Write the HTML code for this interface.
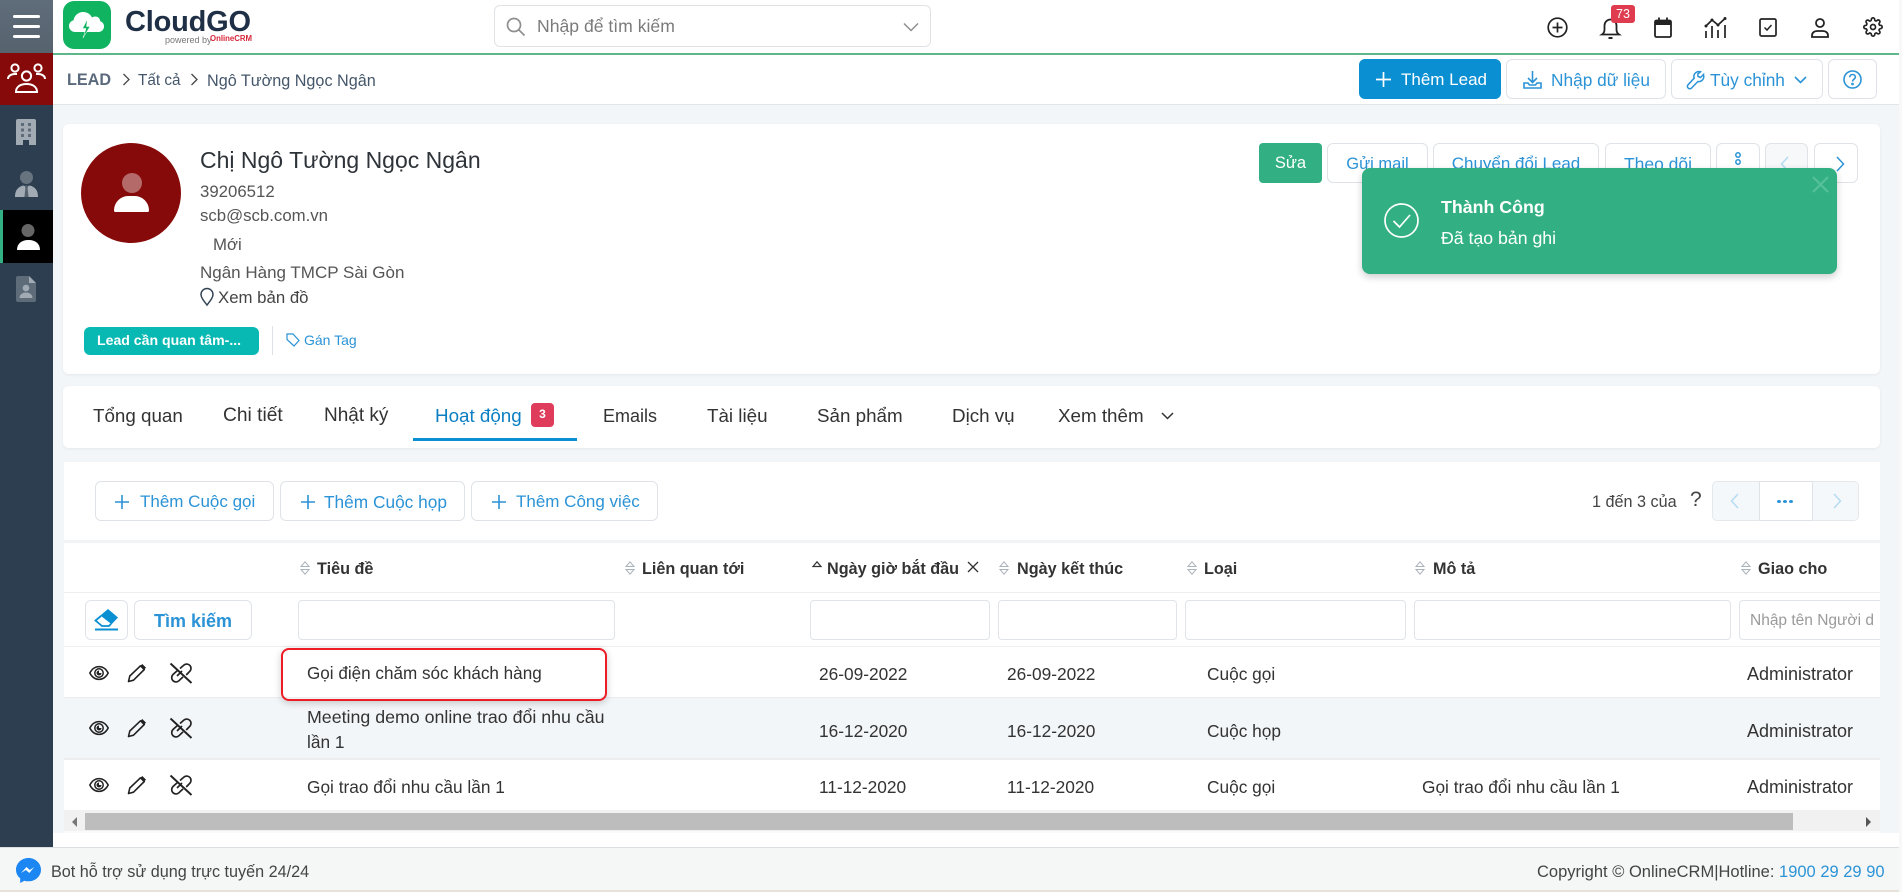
<!DOCTYPE html>
<html lang="vi"><head><meta charset="utf-8"><title>CloudGO</title>
<style>
*{box-sizing:border-box}
html,body{margin:0;padding:0;width:1902px;height:892px;overflow:hidden;background:#fff;font-family:"Liberation Sans","Noto Sans CJK SC",sans-serif;color:#333}
.a{position:absolute}
.t{position:absolute;white-space:nowrap;line-height:20px;height:20px}
.b{position:absolute;background:#fff;border:1px solid #dfe3e8;border-radius:6px;color:#2b93d6;display:flex;align-items:center;justify-content:center;white-space:nowrap;font-size:17px;padding-top:2px}
.in{position:absolute;top:600px;height:40px;background:#fff;border:1px solid #e0e3e7;border-radius:4px}
.h{font-size:16.200px;font-weight:bold;color:#333;top:559px}
.c{font-size:17.300px;color:#333}
.p{font-size:16.800px;color:#555}
svg{position:absolute;overflow:visible}
.tab{font-size:18.800px;color:#333;top:406px}
</style></head><body>
<svg width="0" height="0" style="position:absolute"><defs>
<symbol id="sort" viewBox="0 0 10 14"><path d="M5 .8 9 5.500H1zM1 8.500h8L5 13.200z" fill="none" stroke="#aab2ba" stroke-width="1"/></symbol>
<symbol id="eye" viewBox="0 0 20 20"><path d="M.8 10C3 5.800 6.200 3.600 10 3.600s7 2.200 9.200 6.400c-2.200 4.200-5.400 6.400-9.200 6.400S3 14.200.8 10z" fill="none" stroke="#222" stroke-width="1.500"/><circle cx="10" cy="10" r="4.200" fill="none" stroke="#222" stroke-width="1.500"/><path d="M10 7.500a2.500 2.500 0 1 0 2.500 2.500H10z" fill="#222"/></symbol>
<symbol id="pen" viewBox="0 0 20 20"><path d="M1.500 18.500 2.800 13 13.500 2.800l3.800 3.700L6.500 17.200z" fill="none" stroke="#222" stroke-width="1.600" stroke-linejoin="round"/><path d="M13.200 3 15.300 1l3.700 3.600-2 2.200z" fill="#222"/></symbol>
<symbol id="unlink" viewBox="0 0 24 22"><path d="M9 8 4 12.500a4.300 4.300 0 0 0 6 6.200l4-3.800" fill="none" stroke="#222" stroke-width="1.700"/><path d="M11 6.500 15 3a4.300 4.300 0 0 1 6 6.100l-3.800 3.900" fill="none" stroke="#222" stroke-width="1.700"/><path d="M8 14l5-5" stroke="#222" stroke-width="1.700"/><path d="M1.500 1.500 22.500 21" stroke="#222" stroke-width="1.900"/></symbol>
<symbol id="plus" viewBox="0 0 16 16"><path d="M8 1v14M1 8h14" stroke="#2b93d6" stroke-width="1.600" fill="none"/></symbol>
</defs></svg>

<!-- sidebar -->
<div class="a" style="left:0;top:0;width:53px;height:848px;background:#2c3e50"></div>
<div class="a" style="left:0;top:0;width:53px;height:53px;background:linear-gradient(#5f6c79,#56636f)"></div>
<div class="a" style="left:13px;top:15px;width:27px;height:3px;background:#fff;border-radius:2px"></div>
<div class="a" style="left:13px;top:25px;width:27px;height:3px;background:#fff;border-radius:2px"></div>
<div class="a" style="left:13px;top:35px;width:27px;height:3px;background:#fff;border-radius:2px"></div>
<div class="a" style="left:0;top:53px;width:53px;height:52px;background:#870a0a"></div>
<svg style="left:7px;top:62px" width="39" height="32" viewBox="0 0 39 32" fill="none" stroke="#fff" stroke-width="2">
<circle cx="8" cy="6" r="3.600"/><circle cx="31" cy="6" r="3.600"/><circle cx="19.500" cy="14" r="4.600"/>
<path d="M1 17c0-3 3-5 7-5h2M38 17c0-3-3-5-7-5h-2"/><path d="M9 30c0-5 4-8 10.500-8S30 25 30 30z"/></svg>
<!-- building -->
<svg style="left:16px;top:119px" width="20" height="26" viewBox="0 0 20 26"><path d="M2 0h16a2 2 0 0 1 2 2v24h-7v-5H7v5H0V2a2 2 0 0 1 2-2z" fill="#a2abb4"/><g fill="#5e6b78"><rect x="5" y="4" width="3" height="3"/><rect x="12" y="4" width="3" height="3"/><rect x="5" y="9.500" width="3" height="3"/><rect x="12" y="9.500" width="3" height="3"/><rect x="5" y="15" width="3" height="3"/><rect x="12" y="15" width="3" height="3"/></g></svg>
<!-- suit person -->
<svg style="left:15px;top:171px" width="23" height="26" viewBox="0 0 23 26"><circle cx="11.500" cy="6.500" r="6.500" fill="#67747f"/><path d="M0 26c0-7 3-10 8-11.500l3.500 1 3.500-1C20 16 23 19 23 26z" fill="#a2abb4"/><path d="M9.800 14.500h3.400l-.6 3 1 8.500h-4.200l1-8.500z" fill="#55626e"/></svg>
<div class="a" style="left:0;top:210px;width:53px;height:53px;background:#000"></div>
<div class="a" style="left:0;top:210px;width:3px;height:53px;background:#32b083"></div>
<svg style="left:17px;top:224px" width="23" height="26" viewBox="0 0 23 26"><circle cx="11" cy="6.500" r="6.500" fill="#666"/><path d="M0 26c0-6 4-10 11.500-10S23 20 23 26z" fill="#fff"/></svg>
<!-- contact doc -->
<svg style="left:16px;top:276px" width="20" height="26" viewBox="0 0 20 26"><path d="M2 0h11l7 7v17a2 2 0 0 1-2 2H2a2 2 0 0 1-2-2V2a2 2 0 0 1 2-2z" fill="#5e6b78"/><path d="M13 0l7 7h-7z" fill="#a2abb4"/><circle cx="10" cy="12" r="3.300" fill="#a2abb4"/><path d="M3.500 22c0-3.500 3-5.500 6.500-5.500s6.500 2 6.500 5.500z" fill="#a2abb4"/></svg>

<!-- header -->
<div class="a" style="left:53px;top:53px;width:1846px;height:1.500px;background:#5fb68b"></div>
<div class="a" style="left:63px;top:1px;width:48px;height:48px;border-radius:11px;background:#0fb360"></div>
<svg style="left:68px;top:10px" width="38" height="30" viewBox="0 0 38 30"><path d="M6.500 22a6 6 0 0 1-1-11.800C6.500 5 11 1.500 16 2c3.800.4 6.500 2.500 8 5.500 1.500-1 3.200-1.300 5-.7 2 .7 3 2.400 3.200 4.300A5.600 5.600 0 0 1 31 22z" fill="#fff"/><path d="M19.500 9 14.500 18.500h3.500L15 28l7-11.500h-3.500z" fill="#0fb360" stroke="#fff" stroke-width=".5"/></svg>
<div class="t" style="left:125px;top:6px;height:32px;line-height:32px;font-size:29px;font-weight:bold;color:#1f2f45;letter-spacing:-.2px">CloudGO</div>
<div class="t" style="left:165px;top:34px;height:12px;line-height:12px;font-size:9px;color:#777">powered by</div>
<div class="t" style="left:210px;top:33px;height:12px;line-height:12px;font-size:7.800px;font-weight:bold;color:#d8263a">OnlineCRM</div>
<div class="a" style="left:494px;top:5px;width:437px;height:42px;border:1px solid #dfe3e6;border-radius:6px"></div>
<svg style="left:506px;top:17px" width="20" height="20" viewBox="0 0 20 20" fill="none" stroke="#8f8f8f" stroke-width="1.700"><circle cx="8" cy="8" r="6.500"/><path d="M13 13l5.500 5.500"/></svg>
<div class="t" style="left:537px;top:16px;font-size:17.600px;color:#7b7b7b">Nhập để tìm kiếm</div>
<svg style="left:902px;top:22px" width="18" height="10" viewBox="0 0 18 10" fill="none" stroke="#8f8f8f" stroke-width="1.500"><path d="M2 1.500l7 7 7-7"/></svg>

<svg style="left:1547px;top:17px" width="21" height="21" viewBox="0 0 21 21" fill="none" stroke="#222" stroke-width="1.700"><circle cx="10.500" cy="10.500" r="9.300"/><path d="M10.500 5.500v10M5.500 10.500h10"/></svg>
<svg style="left:1601px;top:17px" width="19" height="22" viewBox="0 0 19 22" fill="none" stroke="#222" stroke-width="1.800"><path d="M1 17.500c1.500-1 2.500-2.500 2.500-5V8.500a6 6 0 0 1 12 0v4c0 2.500 1 4 2.500 5z"/><path d="M7.500 21h4" stroke-width="2"/></svg>
<div class="a" style="left:1611px;top:5px;width:24px;height:18px;background:#df3c4f;border-radius:3px;color:#fff;font-size:12.500px;line-height:18px;text-align:center">73</div>
<svg style="left:1654px;top:17px" width="18" height="21" viewBox="0 0 18 21"><rect x="1" y="3.500" width="16" height="16.500" rx="1.500" fill="none" stroke="#222" stroke-width="1.800"/><path d="M1 3.500h16V8H1z" fill="#222"/><path d="M5 .5v4M13 .5v4" stroke="#222" stroke-width="1.800"/></svg>
<svg style="left:1704px;top:17px" width="23" height="21" viewBox="0 0 23 21" fill="none" stroke="#222" stroke-width="1.700"><path d="M2 9l6-6 6 5 7-6.500"/><path d="M2 14v7M8 9v12M14 13v8M21 8v13"/><g fill="#222" stroke="none"><circle cx="2" cy="9" r="1.500"/><circle cx="8" cy="3" r="1.500"/><circle cx="14" cy="8" r="1.500"/><circle cx="21" cy="1.500" r="1.500"/></g></svg>
<svg style="left:1759px;top:18px" width="18" height="19" viewBox="0 0 18 19" fill="none" stroke="#222" stroke-width="1.700"><rect x="1" y="1" width="16" height="17" rx="1.500"/><path d="M5.500 9.500l2.500 2.500 4.500-5" stroke-width="1.500"/></svg>
<svg style="left:1811px;top:18px" width="18" height="20" viewBox="0 0 18 20" fill="none" stroke="#222" stroke-width="1.800"><circle cx="9" cy="5" r="4"/><path d="M1 19v-1.500c0-3 2.500-4.500 5-4.500h6c2.500 0 5 1.500 5 4.500V19z"/></svg>
<svg style="left:1863px;top:17px" width="20" height="20" viewBox="0 0 24 24" fill="none" stroke="#222" stroke-width="2"><path d="M12 15a3 3 0 100-6 3 3 0 000 6z"/><path d="M19.400 15a1.650 1.650 0 00.33 1.820l.06.06a2 2 0 010 2.830 2 2 0 01-2.830 0l-.06-.06a1.650 1.650 0 00-1.820-.33 1.650 1.650 0 00-1 1.510V21a2 2 0 01-2 2 2 2 0 01-2-2v-.09A1.650 1.650 0 009 19.400a1.650 1.650 0 00-1.820.33l-.06.06a2 2 0 01-2.830 0 2 2 0 010-2.830l.06-.06a1.650 1.650 0 00.33-1.820 1.650 1.650 0 00-1.510-1H3a2 2 0 01-2-2 2 2 0 012-2h.09A1.650 1.650 0 004.600 9a1.650 1.650 0 00-.33-1.820l-.06-.06a2 2 0 010-2.830 2 2 0 012.830 0l.06.06a1.650 1.650 0 001.820.33H9a1.650 1.650 0 001-1.510V3a2 2 0 012-2 2 2 0 012 2v.09a1.650 1.650 0 001 1.510 1.650 1.650 0 001.820-.33l.06-.06a2 2 0 012.830 0 2 2 0 010 2.830l-.06.06a1.650 1.650 0 00-.33 1.820V9a1.650 1.650 0 001.510 1H21a2 2 0 012 2 2 2 0 01-2 2h-.09a1.650 1.650 0 00-1.510 1z"/></svg>

<!-- breadcrumb -->
<div class="a" style="left:53px;top:104px;width:1846px;height:744px;background:#f3f6f9"></div>
<div class="a" style="left:53px;top:104px;width:1846px;height:1px;background:#e3e6e9"></div>
<div class="t" style="left:67px;top:70px;font-size:16.200px;font-weight:bold;color:#5a6a7c">LEAD</div>
<svg style="left:122px;top:73px" width="8" height="13" viewBox="0 0 8 13" fill="none" stroke="#444" stroke-width="1.300"><path d="M1.500 1l5.500 5.500L1.500 12"/></svg>
<div class="t" style="left:138px;top:71px;font-size:15.300px;color:#44566a">Tất cả</div>
<svg style="left:190px;top:73px" width="8" height="13" viewBox="0 0 8 13" fill="none" stroke="#444" stroke-width="1.300"><path d="M1.500 1l5.500 5.500L1.500 12"/></svg>
<div class="t" style="left:207px;top:71px;font-size:16.200px;color:#44566a">Ngô Tường Ngọc Ngân</div>

<div class="b" style="left:1359px;top:59px;width:142px;height:40px;background:#0b8fd3;border-color:#0b8fd3;color:#fff;justify-content:flex-start;padding-left:16px"><svg style="left:16px;top:12px" width="15" height="15" viewBox="0 0 16 16"><path d="M8 0v16M0 8h16" stroke="#fff" stroke-width="1.800"/></svg><span style="margin-left:25px">Thêm Lead</span></div>
<div class="b" style="left:1506px;top:59px;width:160px;height:40px;font-size:17.300px;justify-content:flex-start"><svg style="left:16px;top:11px" width="19" height="18" viewBox="0 0 19 18" fill="none" stroke="#2b93d6" stroke-width="1.600"><path d="M9.500 0v11M5 7l4.500 4.500L14 7"/><path d="M1 12v5h17v-5h-4l-1.500 2h-6L5 12z"/></svg><span style="margin-left:44px">Nhập dữ liệu</span></div>
<div class="b" style="left:1671px;top:59px;width:152px;height:40px;font-size:17.300px;justify-content:flex-start"><svg style="left:15px;top:11px" width="18" height="19" viewBox="0 0 18 19" fill="none" stroke="#2b93d6" stroke-width="1.500"><path d="M16.500 3.500 13.500 6.500 11 5.500 10.800 3 13.500.8a5 5 0 0 0-6.300 6.400L1 13.800a2.300 2.300 0 0 0 .3 3.400 2.300 2.300 0 0 0 3.300-.2l6.300-6.500a5 5 0 0 0 5.600-6.500z"/></svg><span style="margin-left:38px">Tùy chỉnh</span><svg style="left:122px;top:16px" width="13" height="8" viewBox="0 0 13 8" fill="none" stroke="#2b93d6" stroke-width="1.600"><path d="M1 1l5.500 5.500L12 1"/></svg></div>
<div class="b" style="left:1828px;top:59px;width:49px;height:40px"><svg style="left:14px;top:10px" width="19" height="19" viewBox="0 0 19 19" fill="none" stroke="#2b93d6" stroke-width="1.600"><circle cx="9.500" cy="9.500" r="8.500"/><path d="M6.800 7.200c0-1.600 1.200-2.700 2.800-2.700s2.800 1 2.800 2.500c0 2.200-2.900 2.300-2.900 4.500"/><circle cx="9.500" cy="14" r=".6"/></svg></div>

<!-- profile card -->
<div class="a" style="left:63px;top:124px;width:1817px;height:250px;background:#fff;border-radius:6px;box-shadow:0 1px 3px rgba(0,0,0,.06)"></div>
<div class="a" style="left:81px;top:143px;width:100px;height:100px;border-radius:50%;background:#870a0a"></div>
<div class="a" style="left:122px;top:173px;width:20px;height:20px;border-radius:50%;background:#b56a6a"></div>
<div class="a" style="left:114px;top:196px;width:35px;height:16px;border-radius:17px 17px 2px 2px;background:#fff"></div>
<div class="t" style="left:200px;top:150px;font-size:23px;color:#2d3338">Chị Ngô Tường Ngọc Ngân</div>
<div class="t p" style="left:200px;top:182px">39206512</div>
<div class="t p" style="left:200px;top:206px">scb@scb.com.vn</div>
<div class="t p" style="left:213px;top:235px">Mới</div>
<div class="t p" style="left:200px;top:263px;font-size:17px">Ngân Hàng TMCP Sài Gòn</div>
<svg style="left:200px;top:288px" width="14" height="18" viewBox="0 0 14 18" fill="none" stroke="#344454" stroke-width="1.500"><path d="M7 17C3.500 12.500 1 9.500 1 6.500a6 6 0 0 1 12 0C13 9.500 10.500 12.500 7 17z"/></svg>
<div class="t" style="left:218px;top:288px;font-size:16.800px;color:#444">Xem bản đồ</div>
<div class="a" style="left:84px;top:327px;width:175px;height:28px;background:#08b9b3;border-radius:6px;color:#fff;font-weight:bold;font-size:14.100px;line-height:27px;padding-left:13px;white-space:nowrap">Lead cần quan tâm-...</div>
<div class="a" style="left:272px;top:326px;width:1px;height:29px;background:#dde1e5"></div>
<svg style="left:286px;top:333px" width="14" height="14" viewBox="0 0 14 14" fill="none" stroke="#2b93d6" stroke-width="1.200"><path d="M1 1h6l6 6.500L8 13 1 6.500z"/></svg>
<div class="t" style="left:304px;top:330px;font-size:14px;color:#2b93d6">Gán Tag</div>

<div class="a" style="left:1259px;top:143px;width:63px;height:40px;background:#32b083;border-radius:4px;color:#fff;font-size:16.500px;line-height:41px;text-align:center">Sửa</div>
<div class="b" style="left:1327px;top:143px;width:101px;height:40px;font-size:16.500px">Gửi mail</div>
<div class="b" style="left:1433px;top:143px;width:166px;height:40px">Chuyển đổi Lead</div>
<div class="b" style="left:1605px;top:143px;width:106px;height:40px;font-size:17.500px">Theo dõi</div>
<div class="b" style="left:1716px;top:143px;width:44px;height:40px"></div>
<div class="b" style="left:1765px;top:143px;width:43px;height:40px;background:#f6f8fa"><svg style="left:14px;top:12px" width="10" height="16" viewBox="0 0 10 16" fill="none" stroke="#b4dbf2" stroke-width="1.500"><path d="M8 1 1.500 8 8 15"/></svg></div>
<div class="b" style="left:1814px;top:143px;width:44px;height:40px"><svg style="left:20px;top:12px" width="10" height="16" viewBox="0 0 10 16" fill="none" stroke="#2b93d6" stroke-width="1.500"><path d="M2 1l6.500 7L2 15"/></svg></div>
<svg style="left:1733px;top:152px" width="10" height="24" viewBox="0 0 10 24" fill="none" stroke="#2b93d6" stroke-width="1.500"><circle cx="5" cy="3" r="2.200"/><circle cx="5" cy="10" r="2.200"/></svg>

<!-- toast -->
<div class="a" style="left:1362px;top:168px;width:475px;height:106px;background:#32b083;border-radius:8px;box-shadow:0 3px 8px rgba(0,0,0,.2)"></div>
<svg style="left:1384px;top:203px" width="35" height="35" viewBox="0 0 35 35" fill="none" stroke="#fff" stroke-width="1.700"><circle cx="17.500" cy="17.500" r="16.500"/><path d="M9.500 18l6 6 10.500-12"/></svg>
<div class="t" style="left:1441px;top:197px;font-size:17.800px;font-weight:bold;color:#fff">Thành Công</div>
<div class="t" style="left:1441px;top:228px;font-size:17.700px;color:#fff">Đã tạo bản ghi</div>
<svg style="left:1812px;top:176px" width="17" height="17" viewBox="0 0 17 17" stroke="#55c09a" stroke-width="2.200"><path d="M1 1l15 15M16 1 1 16"/></svg>

<!-- tabs -->
<div class="a" style="left:63px;top:386px;width:1817px;height:62px;background:#fff;border-radius:6px;box-shadow:0 1px 3px rgba(0,0,0,.06)"></div>
<div class="t tab" style="left:93px">Tổng quan</div>
<div class="t tab" style="left:223px;font-size:19.200px">Chi tiết</div>
<div class="t tab" style="left:324px;font-size:19px">Nhật ký</div>
<div class="t tab" style="left:435px;color:#0b7fc2">Hoạt động</div>
<div class="a" style="left:531px;top:403px;width:23px;height:24px;background:#df3c5c;border-radius:4px;color:#fff;font-size:12px;font-weight:bold;line-height:23px;text-align:center">3</div>
<div class="a" style="left:413px;top:438px;width:164px;height:3px;background:#0b8fd3"></div>
<div class="t tab" style="left:603px;font-size:18px">Emails</div>
<div class="t tab" style="left:707px">Tài liệu</div>
<div class="t tab" style="left:817px">Sản phẩm</div>
<div class="t tab" style="left:952px">Dịch vụ</div>
<div class="t tab" style="left:1058px">Xem thêm</div>
<svg style="left:1161px;top:412px" width="13" height="8" viewBox="0 0 13 8" fill="none" stroke="#333" stroke-width="1.500"><path d="M1 1l5.500 5.500L12 1"/></svg>

<!-- panel -->
<div class="a" style="left:64px;top:462px;width:1816px;height:371px;background:#fff"></div>
<div class="b" style="left:95px;top:481px;width:179px;height:40px;justify-content:flex-start"><svg style="left:18px;top:12px" width="16" height="16"><use href="#plus"/></svg><span style="margin-left:44px">Thêm Cuộc gọi</span></div>
<div class="b" style="left:280px;top:481px;width:185px;height:40px;justify-content:flex-start;font-size:17.300px"><svg style="left:19px;top:12px" width="16" height="16"><use href="#plus"/></svg><span style="margin-left:43px">Thêm Cuộc họp</span></div>
<div class="b" style="left:471px;top:481px;width:187px;height:40px;justify-content:flex-start"><svg style="left:19px;top:12px" width="16" height="16"><use href="#plus"/></svg><span style="margin-left:44px">Thêm Công việc</span></div>
<div class="t" style="left:1592px;top:492px;font-size:16.200px;color:#444">1 đến 3 của</div>
<div class="t" style="left:1690px;top:490px;font-size:21px;color:#444">?</div>
<div class="a" style="left:1712px;top:481px;width:147px;height:40px;background:#f5f8fa;border:1px solid #e5e9ec;border-radius:5px"></div>
<div class="a" style="left:1759px;top:481px;width:54px;height:40px;background:#fff;border:1px solid #dfe3e8"></div>
<svg style="left:1730px;top:493px" width="10" height="16" viewBox="0 0 10 16" fill="none" stroke="#b4dbf2" stroke-width="1.500"><path d="M8 1 1.500 8 8 15"/></svg>
<svg style="left:1832px;top:493px" width="10" height="16" viewBox="0 0 10 16" fill="none" stroke="#b4dbf2" stroke-width="1.500"><path d="M2 1l6.500 7L2 15"/></svg>
<div class="a" style="left:1777px;top:500px;width:4px;height:3px;background:#2b93d6;box-shadow:6px 0 0 #2b93d6,12px 0 0 #2b93d6;border-radius:50%"></div>

<div class="a" style="left:64px;top:540px;width:1816px;height:3px;background:#f1f3f5"></div>
<div class="a" style="left:64px;top:592px;width:1816px;height:1px;background:#eceef0"></div>
<div class="a" style="left:64px;top:646px;width:1816px;height:1px;background:#eceef0"></div>

<svg style="left:300px;top:561px" width="10" height="14"><use href="#sort"/></svg><div class="t h" style="left:317px">Tiêu đề</div>
<svg style="left:625px;top:561px" width="10" height="14"><use href="#sort"/></svg><div class="t h" style="left:642px">Liên quan tới</div>
<svg style="left:812px;top:561px" width="10" height="7" viewBox="0 0 10 7"><path d="M5 .8 9 5.500H1z" fill="none" stroke="#333" stroke-width="1.200"/></svg><div class="t h" style="left:827px">Ngày giờ bắt đầu</div>
<svg style="left:967px;top:561px" width="12" height="12" viewBox="0 0 12 12" stroke="#333" stroke-width="1.300"><path d="M1 1l10 10M11 1 1 11"/></svg>
<svg style="left:999px;top:561px" width="10" height="14"><use href="#sort"/></svg><div class="t h" style="left:1017px">Ngày kết thúc</div>
<svg style="left:1187px;top:561px" width="10" height="14"><use href="#sort"/></svg><div class="t h" style="left:1204px">Loại</div>
<svg style="left:1415px;top:561px" width="10" height="14"><use href="#sort"/></svg><div class="t h" style="left:1433px">Mô tả</div>
<svg style="left:1741px;top:561px" width="10" height="14"><use href="#sort"/></svg><div class="t h" style="left:1758px">Giao cho</div>

<div class="b" style="left:85px;top:600px;width:43px;height:40px"><svg style="left:8px;top:7px" width="25" height="24" viewBox="0 0 25 24"><path d="M14 1 24 9.500 16 18H9L1 12z" fill="#0b8fd3"/><path d="M7 8 1.500 12.500 8 18h7l2-2.200" fill="#fff" stroke="#0b8fd3" stroke-width="1.800"/><path d="M1 21.500h23" stroke="#0b8fd3" stroke-width="2"/></svg></div>
<div class="b" style="left:134px;top:600px;width:118px;height:40px;font-size:18px;font-weight:bold;color:#2b93d6">Tìm kiếm</div>
<div class="in" style="left:298px;width:317px"></div>
<div class="in" style="left:810px;width:180px"></div>
<div class="in" style="left:998px;width:179px"></div>
<div class="in" style="left:1185px;width:221px"></div>
<div class="in" style="left:1414px;width:317px"></div>
<div class="in" style="left:1739px;width:141px;overflow:hidden;border-right:0;border-radius:4px 0 0 4px;font-size:15.500px;color:#9a9a9a;line-height:40px;padding-left:10px;white-space:nowrap">Nhập tên Người d</div>

<!-- rows -->
<div class="a" style="left:64px;top:697px;width:1816px;height:63px;background:#f3f6f9;border-top:1px solid #e9ecef;border-bottom:2px solid #eceef0"></div>

<svg style="left:89px;top:663px" width="20" height="20"><use href="#eye"/></svg><svg style="left:127px;top:663px" width="20" height="20"><use href="#pen"/></svg><svg style="left:169px;top:662px" width="24" height="22"><use href="#unlink"/></svg>
<svg style="left:89px;top:718px" width="20" height="20"><use href="#eye"/></svg><svg style="left:127px;top:718px" width="20" height="20"><use href="#pen"/></svg><svg style="left:169px;top:717px" width="24" height="22"><use href="#unlink"/></svg>
<svg style="left:89px;top:775px" width="20" height="20"><use href="#eye"/></svg><svg style="left:127px;top:775px" width="20" height="20"><use href="#pen"/></svg><svg style="left:169px;top:774px" width="24" height="22"><use href="#unlink"/></svg>

<div class="t c" style="left:307px;top:664px;font-size:17.100px">Gọi điện chăm sóc khách hàng</div>
<div class="t c" style="left:307px;top:707px;font-size:17.800px">Meeting demo online trao đổi nhu cầu</div>
<div class="t c" style="left:307px;top:732px">lần 1</div>
<div class="t c" style="left:307px;top:777px">Gọi trao đổi nhu cầu lần 1</div>
<div class="t c" style="left:819px;top:664px">26-09-2022</div><div class="t c" style="left:1007px;top:664px">26-09-2022</div><div class="t c" style="left:1207px;top:664px">Cuộc gọi</div><div class="t c" style="left:1747px;top:664px;font-size:18px">Administrator</div>
<div class="t c" style="left:819px;top:721px">16-12-2020</div><div class="t c" style="left:1007px;top:721px">16-12-2020</div><div class="t c" style="left:1207px;top:721px">Cuộc họp</div><div class="t c" style="left:1747px;top:721px;font-size:18px">Administrator</div>
<div class="t c" style="left:819px;top:777px">11-12-2020</div><div class="t c" style="left:1007px;top:777px">11-12-2020</div><div class="t c" style="left:1207px;top:777px">Cuộc gọi</div><div class="t c" style="left:1422px;top:777px">Gọi trao đổi nhu cầu lần 1</div><div class="t c" style="left:1747px;top:777px;font-size:18px">Administrator</div>

<div class="a" style="left:281px;top:648px;width:326px;height:53px;border:2px solid #ee1c25;border-radius:8px;box-shadow:0 2px 8px rgba(0,0,0,.2)"></div>

<!-- scrollbar -->
<div class="a" style="left:64px;top:810px;width:1816px;height:23px;background:#f1f1f1;border-bottom:2px solid #fafafa"></div>
<div class="a" style="left:85px;top:813px;width:1708px;height:17px;background:#bdbdbd"></div>
<div class="a" style="left:72px;top:817px;width:0;height:0;border:5px solid transparent;border-left:0;border-right-color:#777"></div>
<div class="a" style="left:1866px;top:817px;width:0;height:0;border:5px solid transparent;border-right:0;border-left-color:#555"></div>
<div class="a" style="left:53px;top:833px;width:1846px;height:15px;background:#fff"></div>

<!-- footer -->
<div class="a" style="left:0;top:847px;width:1899px;height:43px;background:#f5f7f7;border-top:1px solid #dcdfe1"></div>
<div class="a" style="left:0;top:890px;width:1902px;height:2px;background:#e6e2da"></div>
<div class="a" style="left:1899px;top:0;width:3px;height:892px;background:#f8f8f8"></div>
<svg style="left:16px;top:858px" width="25" height="26" viewBox="0 0 25 26"><path d="M12.500 0C5.600 0 0 5.200 0 11.700c0 3.500 1.600 6.500 4.200 8.600V25l4.200-2.300c1.300.4 2.700.6 4.100.6 6.900 0 12.500-5.200 12.500-11.600S19.400 0 12.500 0z" fill="#1c86f2"/><path d="M5 15l5.500-6 3.300 3 4.500-3-5 6-3.400-3z" fill="#fff"/></svg>
<div class="t" style="left:51px;top:862px;font-size:16.200px;color:#444">Bot hỗ trợ sử dụng trực tuyến 24/24</div>
<div class="t" style="left:1537px;top:862px;font-size:16.500px;color:#444">Copyright © OnlineCRM|Hotline: <span style="color:#2b93d6">1900 29 29 90</span></div>
</body></html>
